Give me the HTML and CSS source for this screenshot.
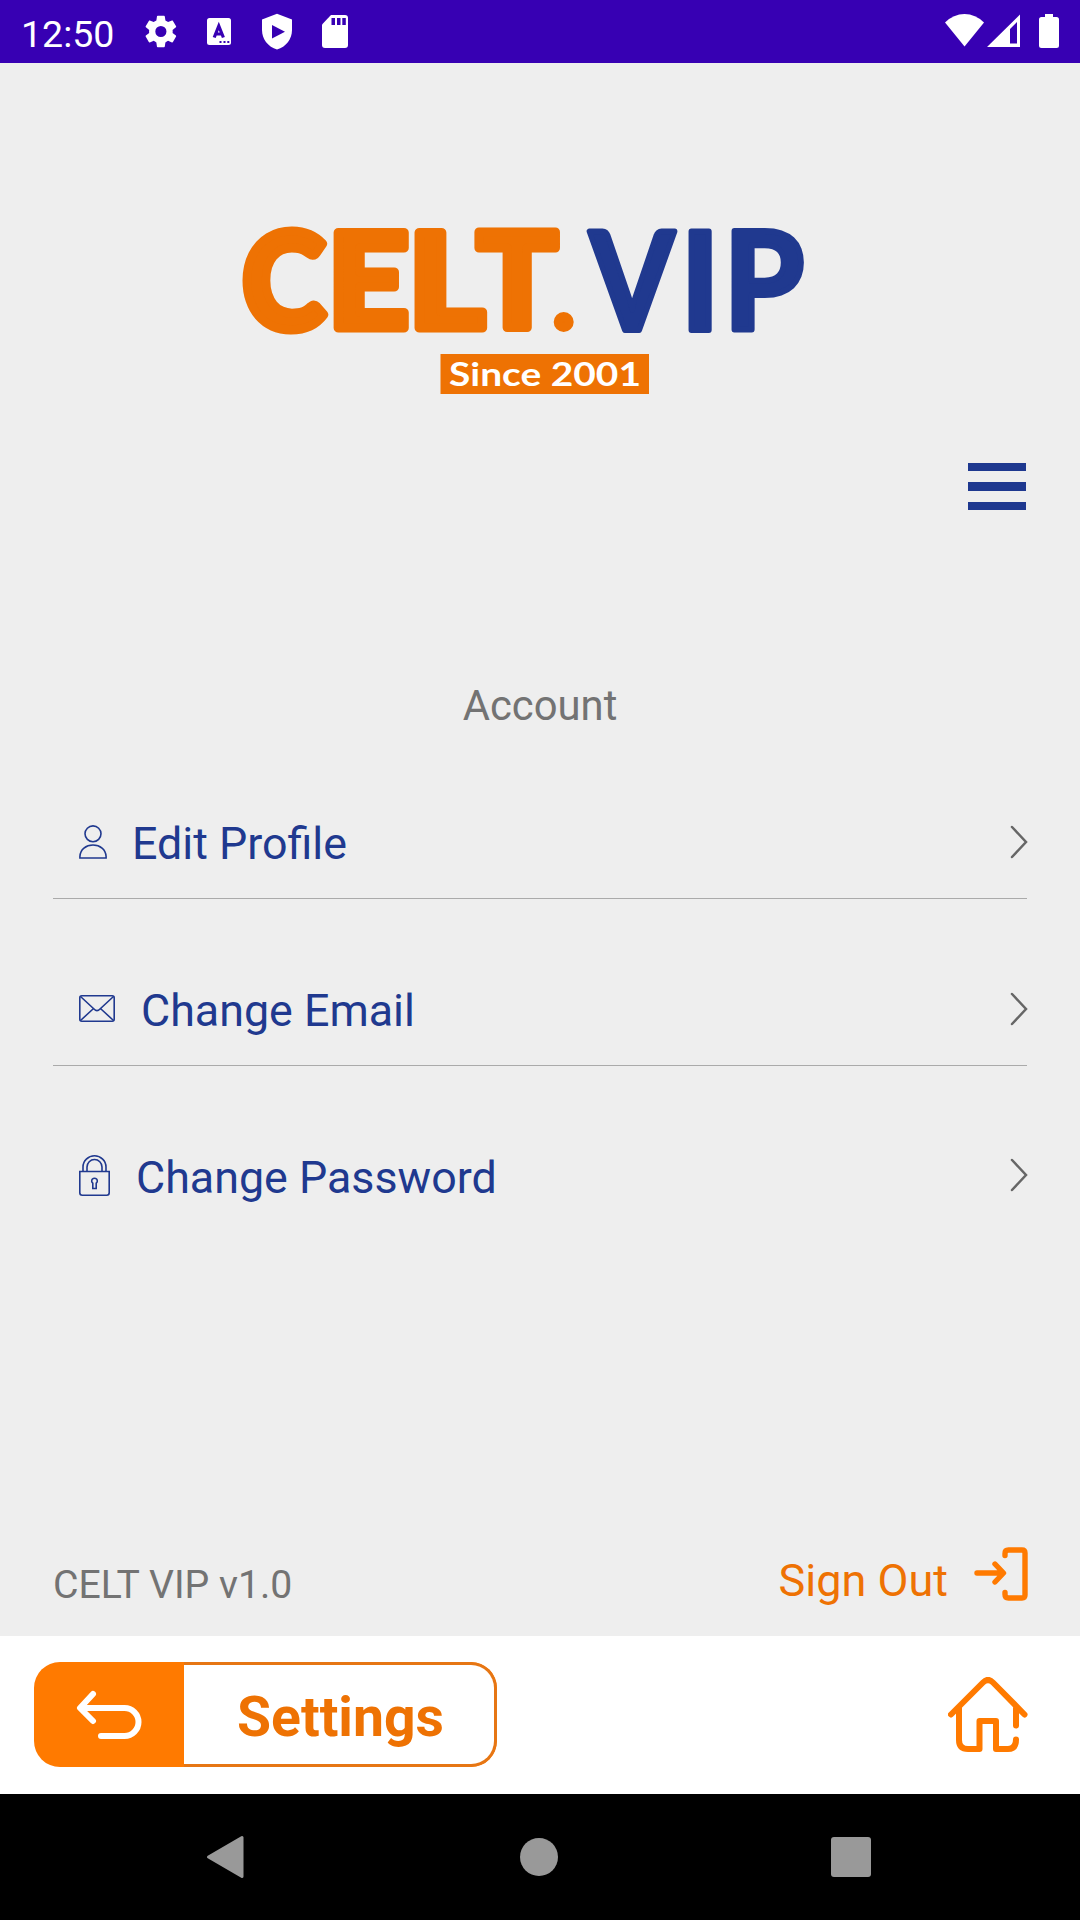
FILE: index.html
```html
<!DOCTYPE html>
<html lang="en">
<head>
<meta charset="utf-8">
<title>Settings</title>
<link rel="stylesheet" href="styles.css">
</head>
<body>
<div class="status-bar">
  <span class="clock">12:50</span>
  <svg class="status-icons" width="230" height="63" viewBox="140 0 230 63">
    <g fill="#fff">
      <path transform="translate(141.2 11.8) scale(1.64)" d="M19.14 12.94c.04-.3.06-.61.06-.94 0-.32-.02-.64-.07-.94l2.03-1.58c.18-.14.23-.41.12-.61l-1.92-3.32c-.12-.22-.37-.29-.59-.22l-2.39.96c-.5-.38-1.03-.7-1.62-.94l-.36-2.54c-.04-.24-.24-.41-.48-.41h-3.84c-.24 0-.43.17-.47.41l-.36 2.54c-.59.24-1.13.57-1.62.94l-2.39-.96c-.22-.08-.47 0-.59.22L2.74 8.87c-.12.21-.08.47.12.61l2.03 1.58c-.05.3-.09.63-.09.94s.02.64.07.94l-2.03 1.58c-.18.14-.23.41-.12.61l1.92 3.32c.12.22.37.29.59.22l2.39-.96c.5.38 1.03.7 1.62.94l.36 2.54c.05.24.24.41.48.41h3.84c.24 0 .44-.17.47-.41l.36-2.54c.59-.24 1.13-.56 1.62-.94l2.39.96c.22.08.47 0 .59-.22l1.92-3.32c.12-.22.07-.47-.12-.61l-2.01-1.58zM12 15.4a3.4 3.4 0 1 1 0-6.8 3.4 3.4 0 0 1 0 6.8z"/>
      <rect x="207" y="18" width="24" height="27" rx="2.5"/>
      <path d="M277 13.700 292 19.500V30c0 9-6 17-15 19.500C268 47 262 39 262 30V19.500z"/>
      <path d="M331 15h14a3 3 0 0 1 3 3v27a3 3 0 0 1-3 3h-20a3 3 0 0 1-3-3V24.500z"/>
    </g>
    <g fill="#3700b3">
      <path d="M272 25v13.500l13-6.800z"/>
      <path d="M331.500 18h3.500v7h-3.500zM337 18h3.500v7H337zM342.300 18h3.500v7h-3.500zM219.500 41h2v2h-2zM223.500 41h2v2h-2zM227.300 41h2v2h-2z"/>
    </g>
    <path d="m214.200 37.500 4.600-11.500 4.600 11.500M215.500 34h6.500" fill="none" stroke="#3700b3" stroke-width="3.200"/>
  </svg>
  <svg class="status-right" width="120" height="63" viewBox="940 0 120 63">
    <g fill="#fff">
      <path d="M964.500 46.500 945 22.500Q953.500 14 964.500 14T984 22.500z"/>
      <path fill-rule="evenodd" d="M1020 14.500V47h-33zM1010 29v14.500h7v-21.500z"/>
      <path d="M1045 14h8v3h3.500a2.500 2.500 0 0 1 2.500 2.500v26a2.500 2.500 0 0 1-2.500 2.500h-15a2.500 2.500 0 0 1-2.500-2.500v-26a2.500 2.500 0 0 1 2.500-2.500h3.500z"/>
    </g>
  </svg>
</div>

<main class="page">
  <svg class="brand" width="600" height="235" viewBox="230 180 600 235" role="img" aria-label="CELT.VIP Since 2001">
    <g class="brand-orange">
      <text transform="translate(242.600 328.500) scale(.955 1.020)">C</text>
      <text transform="translate(327.700 327.500) scale(1.080 1)">E</text>
      <text transform="translate(408.500 327.500) scale(1.110 1)">L</text>
      <text transform="translate(477 327.500) scale(1.015 1)">T</text>
      <circle cx="563.700" cy="322" r="5.500"/>
    </g>
    <g class="brand-blue">
      <text transform="translate(590 330) scale(.890 1)">V</text>
      <text transform="translate(681 330) scale(.950 1)">I</text>
      <text transform="translate(724 330) scale(.950 1)">P</text>
    </g>
    <rect x="440.500" y="354" width="208.500" height="40" fill="#ee7203"/>
    <text class="brand-tag" x="449" y="386" textLength="192" lengthAdjust="spacingAndGlyphs">Since 2001</text>
  </svg>

  <button class="menu" aria-label="Menu"><i></i><i></i><i></i></button>

  <h2 class="section-title">Account</h2>

  <nav class="rows">
    <a class="row">
      <svg class="row-icon" width="28" height="34" viewBox="0 0 28 34"><ellipse cx="14" cy="8.800" rx="8" ry="7.900"/><path d="M.9 33v-1.500C1.200 24.500 7 20 14 20s12.800 4.500 13.100 11.500V33z"/></svg>
      <span>Edit Profile</span>
      <svg class="chevron" width="18" height="34" viewBox="0 0 18 34"><path d="M2 2 16 17 2 32"/></svg>
    </a>
    <a class="row">
      <svg class="row-icon" width="36" height="27" viewBox="0 0 36 27"><rect x=".8" y=".8" width="34.400" height="25.400" rx="2"/><path d="m1.500 1.500 13.500 12.500q3 3.200 6 0L34.500 1.500M1.500 25.500 14 14M34.500 25.500 22 14"/></svg>
      <span>Change Email</span>
      <svg class="chevron" width="18" height="34" viewBox="0 0 18 34"><path d="M2 2 16 17 2 32"/></svg>
    </a>
    <a class="row">
      <svg class="row-icon" width="31" height="41" viewBox="0 0 31 41"><path d="M.8 16.500h29.400v21.200a2.500 2.500 0 0 1-2.500 2.500H3.300a2.500 2.500 0 0 1-2.500-2.500zM4 16.500V12a11.500 11.200 0 0 1 23 0v4.500M8 16.500V12a7.500 7.500 0 0 1 15 0v4.500M13.800 33.500v-5.300a2.800 2.800 0 1 1 3.400 0v5.300z"/></svg>
      <span>Change Password</span>
      <svg class="chevron" width="18" height="34" viewBox="0 0 18 34"><path d="M2 2 16 17 2 32"/></svg>
    </a>
  </nav>

  <div class="meta">
    <span class="version">CELT VIP v1.0</span>
    <a class="sign-out">
      <span>Sign Out</span>
      <svg width="54" height="54" viewBox="0 0 54 54"><path d="M31 8.500V6.500q0-3.500 3.500-3.500H48q3 0 3 3V48q0 3-3 3H34.500q-3.500 0-3.500-3.500v-2M3 26H29M21 17l8.500 9L21 35"/></svg>
    </a>
  </div>
</main>

<footer class="bottom-bar">
  <div class="back-button">
    <span class="back">
      <svg width="68" height="50" viewBox="0 0 68 50"><path d="M18 4 5 18 18 31M6 18H49.500a14 14 0 0 1 0 28H26"/></svg>
    </span>
    <span class="back-label">Settings</span>
  </div>
  <svg class="home" width="80" height="76" viewBox="0 0 80 76"><path d="M3 37.500 35 5.500q5-5 10 0l31.500 32M11 31v32q0 9 9 9h11.500V44h16.500v28H60q8 0 8-9.500M68 31v17.500"/></svg>
</footer>

<div class="nav-bar">
  <svg width="40" height="44" viewBox="0 0 40 44"><path d="M37 2.500V41.500L3.500 22z"/></svg>
  <i class="nav-home"></i>
  <i class="nav-recent"></i>
</div>
</body>
</html>
```
FILE: styles.css
```css
* { box-sizing: border-box; }

body {
  margin: 0;
  width: 1080px;
  height: 1920px;
  display: flex;
  flex-direction: column;
  background: #eee;
  font-family: Roboto, sans-serif;
  overflow: hidden;
}

svg { display: block; flex: none; }

.status-bar {
  height: 63px;
  flex: none;
  display: flex;
  align-items: center;
  background: #3700b3;
  color: #fff;
}
.clock {
  width: 120px;
  padding: 4px 0 0 21px;
  font-size: 37.5px;
  white-space: nowrap;
}
.status-icons { margin-left: 20px; }
.status-right { margin-left: auto; margin-right: 20px; }

.page {
  height: 1573px;
  flex: none;
  display: flex;
  flex-direction: column;
}
.brand { margin: 117px 0 0 230px; }
.brand text { font-family: Lato, sans-serif; }
.brand-orange {
  fill: #ee7203;
  stroke: #ee7203;
  stroke-width: 9px;
  stroke-linejoin: round;
  font-size: 131px;
  font-weight: 900;
}
.brand-blue {
  fill: #20398f;
  stroke: #20398f;
  stroke-width: 6px;
  stroke-linejoin: round;
  font-size: 136px;
  font-weight: 700;
}
.brand .brand-tag {
  fill: #fff;
  font-size: 33px;
  font-weight: 700;
}

.menu {
  width: 58px;
  height: 47px;
  margin: 48px 54px 0 auto;
  padding: 0;
  border: 0;
  background: none;
  display: flex;
  flex-direction: column;
  justify-content: space-between;
}
.menu i { height: 8px; background: #1e388f; }
.menu i:nth-child(2) { height: 9px; }

.section-title {
  margin: 171px 0 0;
  height: 51px;
  line-height: 49px;
  font-size: 41.8px;
  font-weight: 400;
  text-align: center;
  color: #737373;
}

.rows { margin: 0 53px; }
.row {
  height: 167px;
  padding: 57px 0 0 26px;
  display: flex;
  align-items: center;
  gap: 26px;
  border-bottom: 1px solid #aaa;
  font-size: 44.8px;
  color: #20398f;
}
.row:first-child { gap: 25px; }
.row:last-child { border-bottom-color: transparent; }
.row-icon {
  margin-bottom: 4px;
  fill: none;
  stroke: #20398f;
  stroke-width: 1.6px;
}
.chevron {
  margin: 0 -1px 3px auto;
  fill: none;
  stroke: #666;
  stroke-width: 2.5px;
  stroke-linecap: round;
}
.row:last-child .chevron { margin-bottom: 5px; }

.meta {
  margin: auto 52px 0 53px;
  height: 90px;
  display: flex;
  align-items: flex-start;
  justify-content: space-between;
}
.version {
  padding-top: 16px;
  font-size: 39.2px;
  color: #737373;
}
.sign-out {
  display: flex;
  gap: 26px;
  font-size: 45px;
  color: #ee7203;
}
.sign-out span { padding-top: 8px; }
.sign-out svg {
  margin-top: 1px;
  fill: none;
  stroke: #ff7a00;
  stroke-width: 5.4px;
  stroke-linecap: round;
  stroke-linejoin: round;
}

.bottom-bar {
  height: 158px;
  flex: none;
  padding: 0 52px 1px 34px;
  display: flex;
  align-items: center;
  justify-content: space-between;
  background: #fff;
}
.back-button {
  width: 463px;
  height: 105px;
  display: flex;
  overflow: hidden;
  border-radius: 26px;
  background: #ff7a00;
}
.back {
  width: 150px;
  display: flex;
  align-items: center;
  justify-content: center;
}
.back svg, .home {
  fill: none;
  stroke: #fff;
  stroke-width: 6px;
  stroke-linecap: round;
  stroke-linejoin: round;
}
.back-label {
  flex: 1;
  padding: 5px 0 0 3px;
  display: flex;
  align-items: center;
  justify-content: center;
  border: 3px solid #e67614;
  border-left: 0;
  border-radius: 0 26px 26px 0;
  background: #fff;
  font-size: 55.3px;
  font-weight: 700;
  color: #ee7203;
}
.home { stroke: #ff7a00; }

.nav-bar {
  flex: 1;
  padding: 0 209px 0 205px;
  display: flex;
  align-items: center;
  justify-content: space-between;
  background: #000;
}
.nav-bar svg {
  fill: #999;
  stroke: #999;
  stroke-width: 3px;
  stroke-linejoin: round;
}
.nav-home { width: 38px; height: 38px; margin-left: 2px; border-radius: 50%; background: #999; }
.nav-recent { width: 40px; height: 40px; border-radius: 3px; background: #999; }
```
